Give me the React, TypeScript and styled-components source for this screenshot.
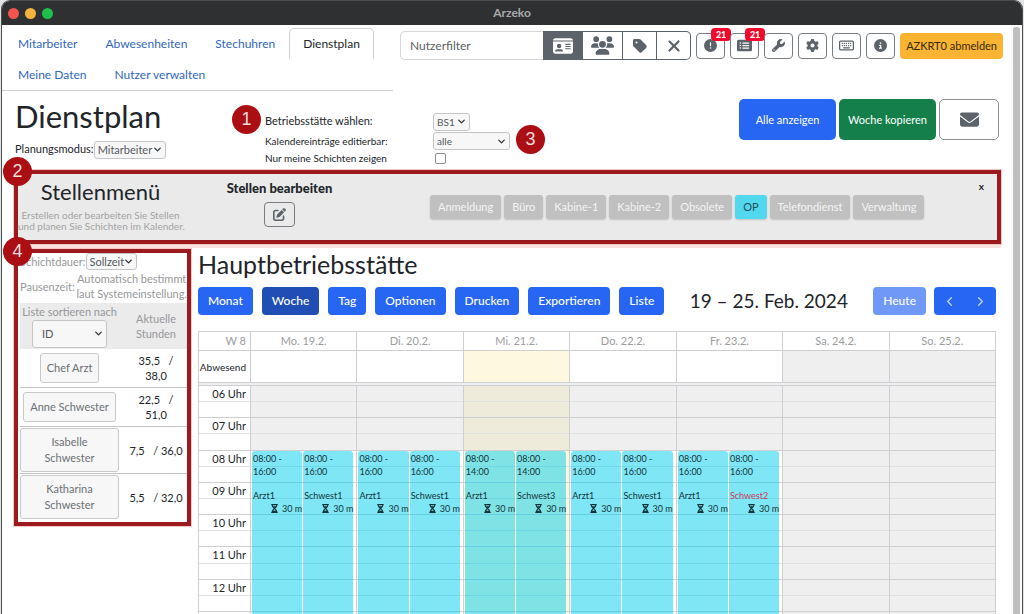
import React from "react";
import styled, { createGlobalStyle, css } from "styled-components";
import {
  FaIdCard,
  FaUsers,
  FaTag,
  FaXmark,
  FaCircleExclamation,
  FaRectangleList,
  FaWrench,
  FaGear,
  FaRegKeyboard,
  FaCircleInfo,
  FaEnvelope,
  FaPenToSquare,
  FaHourglassHalf,
} from "react-icons/fa6";
import { LuChevronLeft, LuChevronRight, LuChevronDown } from "react-icons/lu";

const GlobalStyle = createGlobalStyle`
  *, *::before, *::after { box-sizing: border-box; }
  body {
    margin: 0;
    background: #e4e4e4;
    color: #212529;
    font-family: Lato, "Liberation Sans", sans-serif;
    font-size: 12px;
    line-height: 16px;
  }
  button, input, select { font: inherit; color: inherit; margin: 0; }
  h1, h2, h3, p { margin: 0; font-weight: 400; }
  table { border-spacing: 0; }
`;

const line = "#cdcfd2";
const slate = "#5c636a";
const blue = "#2766f3";
const red = "#9c1a1d";

const Window = styled.div`
  display: flex;
  flex-direction: column;
  height: 100vh;
  margin: 0 1px;
  border: 1px solid #4b4c4e;
  border-bottom: 0;
  border-radius: 9px 9px 0 0;
  overflow: hidden;
  background: #fff;
`;

const TitleBar = styled.header`
  display: grid;
  grid-template-columns: 1fr auto 1fr;
  align-items: center;
  flex: none;
  height: 24px;
  padding: 0 6px;
  background: #2e3032;
  color: #a9aaab;
  font-weight: 700;
`;

const Lights = styled.div`
  display: flex;
  gap: 6px;
`;

const Light = styled.span<{ $color: string }>`
  width: 11px;
  height: 11px;
  border-radius: 50%;
  background: ${(p) => p.$color};
`;

const Viewport = styled.div`
  display: flex;
  flex: 1;
  min-height: 0;
`;

const Page = styled.div`
  display: flex;
  flex-direction: column;
  flex: 1;
  min-width: 0;
`;

const ScrollTrack = styled.div`
  flex: none;
  width: 11px;
  padding: 2px 2px 0 2px;
  background: #fafafa;
`;

const ScrollThumb = styled.div`
  height: 100%;
  border-radius: 3px 3px 0 0;
  background: #bfbfbf;
`;

const TopBar = styled.div`
  display: flex;
  align-items: flex-start;
  gap: 7px;
  padding-right: 8px;
`;

const Tabs = styled.nav`
  display: flex;
  flex-wrap: wrap;
  flex: 0 0 391px;
  padding: 3px 2px 0;
  border-bottom: 1px solid ${line};
`;

const Tab = styled.a<{ $active?: boolean }>`
  height: 31px;
  padding: 7px 13px;
  border: 1px solid transparent;
  border-bottom: 0;
  border-radius: 5px 5px 0 0;
  color: #3067be;
  text-decoration: none;
  ${(p) => p.$active && css`
    border-color: ${line};
    color: #212529;
  `}
`;

const Tools = styled.div`
  display: flex;
  align-items: center;
  flex: 1;
  min-width: 0;
  gap: 5px;
  padding-top: 6px;
`;

const FilterGroup = styled.div`
  display: flex;
  flex: 1;
  min-width: 0;
  height: 29px;
`;

const FilterInput = styled.input`
  flex: 1;
  min-width: 0;
  padding: 0 9px;
  border: 1px solid #d5d8db;
  border-right: 0;
  border-radius: 5px 0 0 5px;
  &::placeholder { color: #595e63; opacity: 1; }
`;

const FilterButton = styled.button<{ $wide?: boolean; $active?: boolean }>`
  display: flex;
  align-items: center;
  justify-content: center;
  flex: none;
  width: ${(p) => (p.$wide ? 40 : 34)}px;
  padding: 0;
  border: 1px solid ${slate};
  border-left-width: ${(p) => (p.$active ? 1 : 0)}px;
  background: ${(p) => (p.$active ? slate : "#fff")};
  color: ${(p) => (p.$active ? "#fff" : slate)};
  &:last-child { border-radius: 0 5px 5px 0; }
`;

const IconButton = styled.button`
  position: relative;
  display: flex;
  align-items: center;
  justify-content: center;
  flex: none;
  width: 29px;
  height: 26px;
  padding: 0;
  border: 1px solid #777d83;
  border-radius: 4px;
  background: #fff;
  color: ${slate};
`;

const Count = styled.span`
  position: absolute;
  top: -6px;
  right: -7px;
  width: 20px;
  border-radius: 4px;
  background: #f3092b;
  color: #fff;
  font-size: 9px;
  font-weight: 900;
  line-height: 13px;
`;

const Logout = styled.button`
  flex: none;
  height: 26px;
  padding: 0 6px;
  border: 0;
  border-radius: 4px;
  background: #fbb332;
  color: #332a18;
  font-size: 11px;
  white-space: nowrap;
`;

const Head = styled.div`
  display: grid;
  grid-template-columns: 250px 1fr auto;
  padding: 6px 12px 0 13px;
  height: 79px;
`;

const PageTitle = styled.h1`
  font-size: 31px;
  line-height: 38px;
`;

const Mode = styled.label`
  display: flex;
  align-items: center;
  height: 28px;
  font-size: 11px;
`;

const SelectBox = styled.span<{ $width: number; $height: number; $pad?: number }>`
  display: inline-grid;
  width: ${(p) => p.$width}px;
  height: ${(p) => p.$height}px;
  > * { grid-area: 1 / 1; }
  select {
    appearance: none;
    width: 100%;
    min-width: 0;
    padding: 0 ${(p) => p.$pad ?? 3}px;
    border: 1px solid #c3c5c7;
    border-radius: 3px;
    background: #f7f7f7;
    color: #55595d;
  }
  svg {
    align-self: center;
    justify-self: end;
    margin-right: 3px;
    color: #333;
    pointer-events: none;
  }
`;

const Settings = styled.div`
  position: relative;
  display: grid;
  grid-template-columns: 168px auto;
  grid-template-rows: 20px 19px 16px;
  align-content: start;
  align-items: center;
  justify-content: start;
  padding-top: 14px;
  font-size: 10px;
  label { line-height: 16px; }
  label:first-child { font-size: 11px; }
  input {
    appearance: none;
    width: 11px;
    height: 11px;
    margin: 0 2px;
    border: 1px solid #8b8d8f;
    border-radius: 2px;
    background: #fff;
  }
`;

const Marker = styled.span<{ $x: number; $y: number }>`
  position: absolute;
  left: ${(p) => p.$x}px;
  top: ${(p) => p.$y}px;
  z-index: 2;
  width: 29px;
  height: 29px;
  border-radius: 50%;
  background: #ab0f14;
  color: #f6dede;
  font-family: "Liberation Sans", sans-serif;
  font-size: 18px;
  line-height: 29px;
  text-align: center;
`;

const Actions = styled.div`
  display: flex;
  gap: 3px;
  padding-top: 2px;
`;

const Action = styled.button<{ $bg: string; $outline?: boolean }>`
  display: flex;
  align-items: center;
  justify-content: center;
  width: ${(p) => (p.$outline ? 60 : 97)}px;
  height: 41px;
  padding: 0;
  border: ${(p) => (p.$outline ? "1px solid #8c9196" : "0")};
  border-radius: 5px;
  background: ${(p) => p.$bg};
  color: ${(p) => (p.$outline ? slate : "#fff")};
  font-size: 11px;
`;

const PositionMenu = styled.section`
  position: relative;
  display: grid;
  grid-template-columns: 165px 193px 1fr auto;
  height: 74px;
  margin: 0 10px 0 12px;
  border: 4px solid ${red};
  outline: 1px solid #f3c9c5;
  box-shadow: 0 4px 0 #f9e3e0;
  background: #eaeaea;
`;

const MenuIntro = styled.div`
  padding-top: 4px;
  text-align: center;
  color: #a3a3a3;
  font-size: 10px;
  line-height: 11px;
  white-space: nowrap;
  h2 {
    margin-bottom: 5px;
    color: #212529;
    font-size: 22px;
    line-height: 27px;
  }
`;

const MenuEdit = styled.div`
  display: flex;
  flex-direction: column;
  align-items: center;
  gap: 6px;
  padding-top: 6px;
  h3 {
    font-size: 13px;
    font-weight: 900;
  }
`;

const EditButton = styled(IconButton)`
  width: 31px;
  height: 25px;
  background: transparent;
`;

const TagList = styled.div`
  display: flex;
  align-items: flex-start;
  gap: 3px;
  padding: 21px 0 0 54px;
`;

const Tag = styled.button<{ $active?: boolean }>`
  height: 24px;
  padding: 0 8px;
  border: 0;
  border-radius: 3px;
  background: ${(p) => (p.$active ? "#52d8ee" : "#c0c0c0")};
  color: ${(p) => (p.$active ? "#1f4f58" : "#f4f4f4")};
  box-shadow: 0 1px 2px rgba(0, 0, 0, 0.18);
  font-size: 11px;
  white-space: nowrap;
`;

const Close = styled.button`
  align-self: start;
  padding: 4px 13px;
  border: 0;
  background: none;
  font-size: 10px;
  font-weight: 700;
`;

const Body = styled.div`
  display: grid;
  grid-template-columns: 177px minmax(0, 1fr);
  gap: 7px;
  flex: 1;
  min-height: 0;
  padding: 5px 15px 0 12px;
`;

const Staff = styled.aside`
  position: relative;
  align-self: start;
  border: 4px solid ${red};
  outline: 1px solid #f3c9c5;
  padding: 0 0 2px 2px;
  background: #fff;
  font-size: 11px;
`;

const StaffOption = styled.div`
  display: flex;
  align-items: center;
  justify-content: space-between;
  color: #96989a;
  line-height: 15px;
  p { text-align: center; white-space: nowrap; }
`;

const Duration = styled(StaffOption)`
  justify-content: flex-start;
  height: 16px;
`;

const Break = styled(StaffOption)`
  height: 34px;
`;

const StaffTable = styled.table`
  width: 100%;
  table-layout: fixed;
  text-align: center;
  th {
    height: 46px;
    padding: 0;
    background: #ebebeb;
    color: #96989a;
    font-weight: 400;
    line-height: 15px;
    white-space: nowrap;
  }
  td {
    padding: 1px 0;
    border-bottom: 1px solid #c4c4c4;
    line-height: 15px;
  }
  th:last-child, td:last-child { padding-left: 6px; }
  tr:last-child td { border-bottom: 0; }
`;

const SortLabel = styled.label`
  display: flex;
  flex-direction: column;
  align-items: center;
  gap: 1px;
  line-height: 14px;
`;

const StaffButton = styled.button<{ $tall?: boolean }>`
  min-height: ${(p) => (p.$tall ? 44 : 30)}px;
  width: ${(p) => (p.$tall ? "100%" : "auto")};
  margin: ${(p) => (p.$tall ? 0 : 3)}px 0;
  padding: 0 ${(p) => (p.$tall ? 20 : 6)}px;
  border: 1px solid #c9c9c9;
  border-radius: 3px;
  background: #f7f7f7;
  color: #6c7074;
  line-height: 16px;
  vertical-align: top;
`;

const Hours = styled.span`
  display: inline-block;
  white-space: pre-wrap;
`;

const Calendar = styled.main`
  display: flex;
  flex-direction: column;
  min-width: 0;
  min-height: 0;
  > h2 {
    font-size: 25px;
    line-height: 30px;
  }
`;

const Toolbar = styled.div`
  display: flex;
  align-items: center;
  justify-content: space-between;
  margin: 8px 0 16px;
  h2 {
    font-size: 19px;
    line-height: 28px;
  }
`;

const Group = styled.div<{ $gap: number }>`
  display: flex;
  gap: ${(p) => p.$gap}px;
`;

const ViewButton = styled.button<{ $tone?: "active" | "muted" }>`
  height: 28px;
  padding: 0 10px;
  border: 0;
  border-radius: 4px;
  background: ${(p) => (p.$tone === "active" ? "#1f4fb4" : p.$tone === "muted" ? "#7099f7" : blue)};
  color: #fff;
  font-weight: 500;
`;

const Pager = styled.div`
  display: flex;
  border-radius: 4px;
  background: ${blue};
  button {
    display: flex;
    align-items: center;
    justify-content: center;
    width: 31px;
    height: 28px;
    padding: 0;
    border: 0;
    background: none;
    color: #c6d7fd;
  }
`;

const dayColumns = "51px repeat(7, minmax(0, 1fr))";

const DayTable = styled.table`
  display: block;
  border: 1px solid ${line};
  border-bottom: 0;
  thead, tbody { display: block; }
  tr {
    display: grid;
    grid-template-columns: ${dayColumns};
  }
  th, td {
    padding: 0;
    border-left: 1px solid ${line};
    border-bottom: 1px solid ${line};
    font-weight: 400;
  }
  thead th {
    height: 19px;
    color: #9a9c9e;
    font-size: 11px;
    line-height: 18px;
  }
  th:first-child {
    padding-right: 4px;
    border-left: 0;
    text-align: right;
  }
  tbody th {
    height: 32px;
    font-size: 10px;
    line-height: 32px;
  }
`;

type Tone = "work" | "today" | "off";
const openTone = { work: "#fff", today: "#fff8e1", off: "#efefef" };

const AllDay = styled.td<{ $tone: Tone }>`
  background: ${(p) => openTone[p.$tone]};
`;

const TimeGrid = styled.div`
  display: grid;
  grid-template-columns: ${dayColumns};
  grid-template-rows: minmax(0, 1fr);
  flex: 1;
  min-height: 0;
  border: 1px solid ${line};
  border-bottom: 0;
`;

const Divider = styled.div`
  flex: none;
  height: 2px;
  border: 1px solid ${line};
  border-width: 0 1px;
  background: #eeeff1;
`;

const Column = styled.div<{ $axis?: boolean }>`
  display: grid;
  grid-template-rows: repeat(14, minmax(0, 1fr)) 2px;
  grid-template-columns: minmax(0, 1fr);
  min-height: 0;
  border-left: ${(p) => (p.$axis ? "0" : `1px solid ${line}`)};
`;

const Slot = styled.div<{ $row: number; $bg: string }>`
  grid-area: ${(p) => p.$row} / 1;
  min-height: 0;
  padding-right: 4px;
  border-bottom: 1px solid ${(p) => (p.$row % 2 ? "#e0e1e3" : line)};
  background: ${(p) => p.$bg};
  font-size: 11px;
  line-height: 15px;
  text-align: right;
  &:last-of-type { border-bottom: 0; }
`;

const Events = styled.section`
  grid-area: 5 / 1 / -1 / 1;
  display: grid;
  grid-template-columns: minmax(0, 1fr) minmax(0, 1fr);
  gap: 1px;
  margin: 0 3px 0 1px;
  z-index: 1;
`;

const EventBox = styled.article`
  display: flex;
  flex-direction: column;
  min-width: 0;
  padding: 1px 0 0 1px;
  border-radius: 3px 3px 0 0;
  background: rgba(0, 206, 236, 0.5);
  color: #13343a;
  font-size: 9px;
  line-height: 13px;
  white-space: nowrap;
`;

const Person = styled.span<{ $alert?: boolean }>`
  margin-top: 11px;
  color: ${(p) => (p.$alert ? "#c93a5c" : "inherit")};
`;

const Pause = styled.span`
  display: flex;
  align-items: center;
  justify-content: flex-end;
  gap: 3px;
`;

function Dropdown({ id, value, width, height, pad }: { id: string; value: string; width: number; height: number; pad?: number }) {
  return (
    <SelectBox $width={width} $height={height} $pad={pad}>
      <select id={id} defaultValue={value}>
        <option>{value}</option>
      </select>
      <LuChevronDown size={11} strokeWidth={3} />
    </SelectBox>
  );
}

const tabs = ["Mitarbeiter", "Abwesenheiten", "Stechuhren", "Dienstplan", "Meine Daten", "Nutzer verwalten"];
const positions = ["Anmeldung", "Büro", "Kabine-1", "Kabine-2", "Obsolete", "OP", "Telefondienst", "Verwaltung"];
const views = ["Monat", "Woche", "Tag", "Optionen", "Drucken", "Exportieren", "Liste"];
const hours = ["06 Uhr", "07 Uhr", "08 Uhr", "09 Uhr", "10 Uhr", "11 Uhr", "12 Uhr"];

const staff = [
  { name: "Chef Arzt", done: "35,5", total: "38,0" },
  { name: "Anne Schwester", done: "22,5", total: "51,0" },
  { name: "Isabelle Schwester", done: "7,5", total: "36,0", tall: true },
  { name: "Katharina Schwester", done: "5,5", total: "32,0", tall: true },
];

const days: { label: string; tone: Tone; end?: string; people?: string[] }[] = [
  { label: "Mo. 19.2.", tone: "work", end: "16:00", people: ["Arzt1", "Schwest1"] },
  { label: "Di. 20.2.", tone: "work", end: "16:00", people: ["Arzt1", "Schwest1"] },
  { label: "Mi. 21.2.", tone: "today", end: "14:00", people: ["Arzt1", "Schwest3"] },
  { label: "Do. 22.2.", tone: "work", end: "16:00", people: ["Arzt1", "Schwest1"] },
  { label: "Fr. 23.2.", tone: "work", end: "16:00", people: ["Arzt1", "Schwest2"] },
  { label: "Sa. 24.2.", tone: "off" },
  { label: "So. 25.2.", tone: "off" },
];

const slots = Array.from({ length: 15 }, (_, i) => i + 1);

function slotColor(tone: Tone, row: number) {
  if (row > 4) return openTone[tone];
  return tone === "today" ? "#efebdb" : "#efefef";
}

export default function App() {
  return (
    <>
      <GlobalStyle />
      <Window>
        <TitleBar>
          <Lights>
            <Light $color="#f4544f" />
            <Light $color="#f5b23d" />
            <Light $color="#1fbf49" />
          </Lights>
          <span>Arzeko</span>
        </TitleBar>
        <Viewport>
          <Page>
            <TopBar>
              <Tabs>
                {tabs.map((t) => (
                  <Tab key={t} href="#" $active={t === "Dienstplan"}>{t}</Tab>
                ))}
              </Tabs>
              <Tools>
                <FilterGroup>
                  <FilterInput aria-label="Nutzerfilter" placeholder="Nutzerfilter" />
                  <FilterButton $wide $active aria-label="Personen"><FaIdCard size={20} /></FilterButton>
                  <FilterButton $wide aria-label="Gruppen"><FaUsers size={23} /></FilterButton>
                  <FilterButton aria-label="Tags"><FaTag size={16} /></FilterButton>
                  <FilterButton aria-label="Filter leeren"><FaXmark size={18} /></FilterButton>
                </FilterGroup>
                <IconButton aria-label="Hinweise"><FaCircleExclamation size={13} /><Count>21</Count></IconButton>
                <IconButton aria-label="Anträge"><FaRectangleList size={15} /><Count>21</Count></IconButton>
                <IconButton aria-label="Werkzeuge"><FaWrench size={13} /></IconButton>
                <IconButton aria-label="Einstellungen"><FaGear size={13} /></IconButton>
                <IconButton aria-label="Tastatur"><FaRegKeyboard size={15} /></IconButton>
                <IconButton aria-label="Info"><FaCircleInfo size={13} /></IconButton>
                <Logout>AZKRT0 abmelden</Logout>
              </Tools>
            </TopBar>

            <Head>
              <div>
                <PageTitle>Dienstplan</PageTitle>
                <Mode htmlFor="mode">
                  Planungsmodus:
                  <Dropdown id="mode" value="Mitarbeiter" width={72} height={17} />
                </Mode>
              </div>
              <Settings>
                <label htmlFor="site">Betriebsstätte wählen:</label>
                <Dropdown id="site" value="BS1" width={37} height={17} />
                <label htmlFor="editable">Kalendereinträge editierbar:</label>
                <Dropdown id="editable" value="alle" width={77} height={17} />
                <label htmlFor="mine">Nur meine Schichten zeigen</label>
                <input id="mine" type="checkbox" />
                <Marker $x={-33} $y={8}>1</Marker>
                <Marker $x={251} $y={28}>3</Marker>
              </Settings>
              <Actions>
                <Action $bg={blue}>Alle anzeigen</Action>
                <Action $bg="#157f4c">Woche kopieren</Action>
                <Action $bg="#fff" $outline aria-label="Nachricht"><FaEnvelope size={19} /></Action>
              </Actions>
            </Head>

            <PositionMenu>
              <Marker $x={-15} $y={-17}>2</Marker>
              <MenuIntro>
                <h2>Stellenmenü</h2>
                <p>Erstellen oder bearbeiten Sie Stellen<br />und planen Sie Schichten im Kalender.</p>
              </MenuIntro>
              <MenuEdit>
                <h3>Stellen bearbeiten</h3>
                <EditButton aria-label="Stellen bearbeiten"><FaPenToSquare size={13} /></EditButton>
              </MenuEdit>
              <TagList>
                {positions.map((p) => (
                  <Tag key={p} $active={p === "OP"}>{p}</Tag>
                ))}
              </TagList>
              <Close>x</Close>
            </PositionMenu>

            <Body>
              <Staff>
                <Marker $x={-15} $y={-16}>4</Marker>
                <Duration>
                  <label htmlFor="duration">Schichtdauer:</label>
                  <Dropdown id="duration" value="Sollzeit" width={51} height={16} />
                </Duration>
                <Break>
                  <span>Pausenzeit:</span>
                  <p>Automatisch bestimmt<br />laut Systemeinstellung.</p>
                </Break>
                <StaffTable>
                  <colgroup>
                    <col width="99" />
                    <col />
                  </colgroup>
                  <thead>
                    <tr>
                      <th>
                        <SortLabel htmlFor="sort">
                          Liste sortieren nach
                          <Dropdown id="sort" value="ID" width={75} height={28} pad={9} />
                        </SortLabel>
                      </th>
                      <th>Aktuelle<br />Stunden</th>
                    </tr>
                  </thead>
                  <tbody>
                    {staff.map((s) => (
                      <tr key={s.name}>
                        <td><StaffButton $tall={s.tall}>{s.name}</StaffButton></td>
                        <td>
                          <Hours>{s.done}{"   /"}{s.tall ? " " : <br />}{s.total}</Hours>
                        </td>
                      </tr>
                    ))}
                  </tbody>
                </StaffTable>
              </Staff>

              <Calendar>
                <h2>Hauptbetriebsstätte</h2>
                <Toolbar>
                  <Group $gap={9}>
                    {views.map((v) => (
                      <ViewButton key={v} $tone={v === "Woche" ? "active" : undefined}>{v}</ViewButton>
                    ))}
                  </Group>
                  <h2>19 – 25. Feb. 2024</h2>
                  <Group $gap={8}>
                    <ViewButton $tone="muted">Heute</ViewButton>
                    <Pager>
                      <button aria-label="Zurück"><LuChevronLeft size={15} /></button>
                      <button aria-label="Weiter"><LuChevronRight size={15} /></button>
                    </Pager>
                  </Group>
                </Toolbar>
                <DayTable>
                  <thead>
                    <tr>
                      <th>W 8</th>
                      {days.map((d) => <th key={d.label}>{d.label}</th>)}
                    </tr>
                  </thead>
                  <tbody>
                    <tr>
                      <th>Abwesend</th>
                      {days.map((d) => <AllDay key={d.label} $tone={d.tone} />)}
                    </tr>
                  </tbody>
                </DayTable>
                <Divider />
                <TimeGrid>
                  <Column $axis>
                    {slots.map((row) => (
                      <Slot key={row} $row={row} $bg="#fff">{row % 2 ? hours[(row - 1) / 2] : null}</Slot>
                    ))}
                  </Column>
                  {days.map((d) => (
                    <Column key={d.label}>
                      {slots.map((row) => (
                        <Slot key={row} $row={row} $bg={slotColor(d.tone, row)} />
                      ))}
                      {d.people && (
                        <Events>
                          {d.people.map((person) => (
                            <EventBox key={person}>
                              <span>08:00 -</span>
                              <span>{d.end}</span>
                              <Person $alert={person === "Schwest2"}>{person}</Person>
                              <Pause><FaHourglassHalf size={9} />30 m</Pause>
                            </EventBox>
                          ))}
                        </Events>
                      )}
                    </Column>
                  ))}
                </TimeGrid>
              </Calendar>
            </Body>
          </Page>
          <ScrollTrack>
            <ScrollThumb />
          </ScrollTrack>
        </Viewport>
      </Window>
    </>
  );
}
